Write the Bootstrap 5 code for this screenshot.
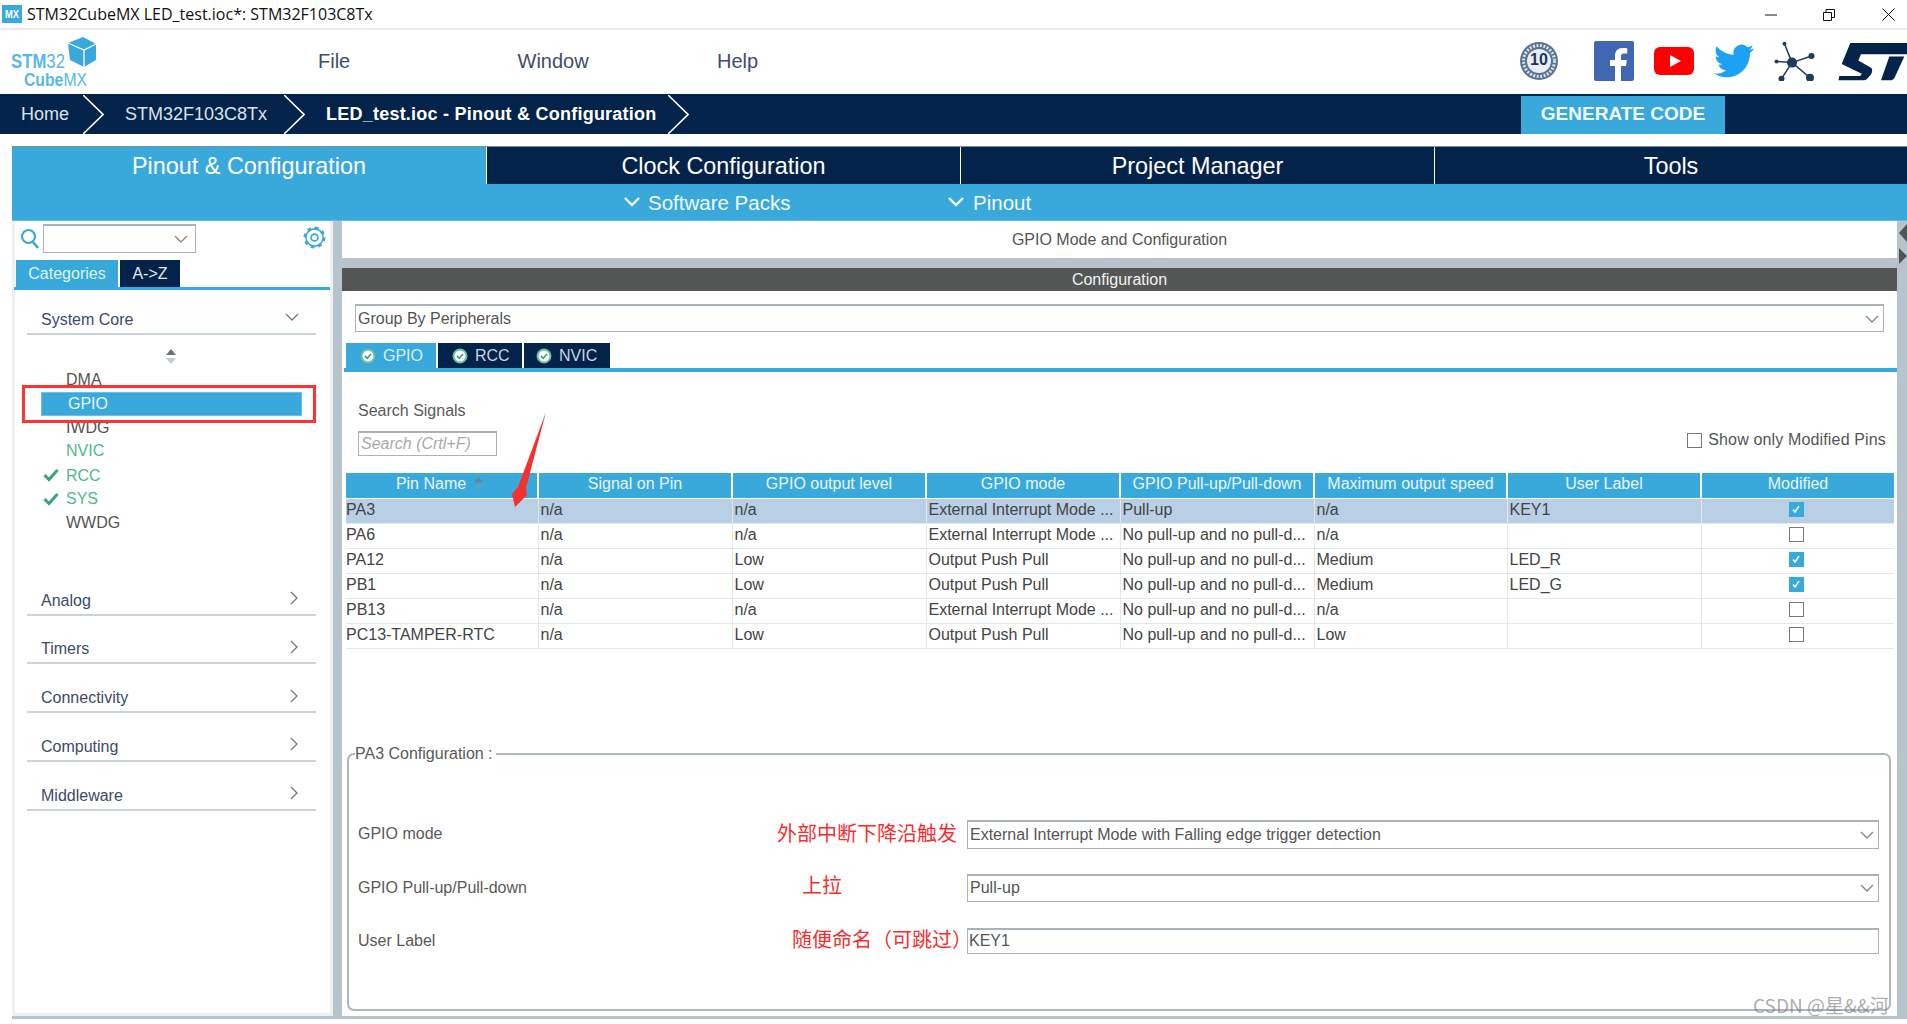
<!DOCTYPE html>
<html lang="en">
<head>
<meta charset="utf-8">
<title>STM32CubeMX</title>
<link href="https://cdn.jsdelivr.net/npm/bootstrap@5.3.0/dist/css/bootstrap.min.css" rel="stylesheet">
<style>
:root{--cube-blue:#39a9dc;--cube-navy:#03234b;--cube-rail:#b8c4cc;--cube-line:#e3e8eb;--cube-edge:#aab3b9;}
html,body{margin:0;background:#fff;overflow:hidden;}
body{font-family:"Liberation Sans",Arial,sans-serif;font-size:16px;color:#4a4a4a;line-height:1.5;}
.app-shell{width:1907px;height:1024px;position:relative;overflow:hidden;}
.title-strip{height:30px;border-bottom:2px solid #ececec;padding-left:2px;}
.title-text{font-family:"Open Sans","Liberation Sans",sans-serif;font-size:16px;color:#111;margin-left:5px;line-height:28px;white-space:nowrap;}
.win-a{width:58px;}
.win-b{width:59px;}
.win-c{width:25px;}
.top-head{height:64px;}
.menu-cell{width:199.5px;font-size:20px;color:#414c6c;padding-bottom:3px;}
.logo-svg{margin-left:8px;margin-right:210px;}
.head-icons{margin-right:-1px;margin-top:-2px;}
.crumb-bar{height:40px;background:var(--cube-navy);color:#fff;border-top:1px solid #03234b;}
.crumb-txt{font-size:18px;color:#dbe3ea;white-space:nowrap;}
.crumb-now{font-size:18px;font-weight:700;color:#fff;white-space:nowrap;letter-spacing:.23px;}
.gen-btn{width:204px;height:38px;margin-right:182px;padding:0;border:0;border-radius:0;background:var(--cube-blue);color:#f4fbff;font-weight:700;font-size:19px;}
.main-tabs{height:38px;margin:12px 0 0 12px;border-top:1px solid #7a8ea6;}
.main-tab{height:37px;background:var(--cube-navy);color:#fff;font-size:23.4px;line-height:38.5px;text-align:center;border-left:1px solid #fff;width:474px;}
.main-tab.on{background:var(--cube-blue);border-left:0;width:474px;}
.main-tab.w3{width:473px;}
.sub-bar{height:37px;margin-left:12px;background:var(--cube-blue);color:#f3fafe;font-size:20.5px;border-bottom:1px solid #5cbce6;}
.sub-lab{padding-top:2px;}
.work{height:798px;margin-left:12px;border-bottom:3px solid var(--cube-rail);background:#fff;position:relative;}
.side-pane{width:321px;border-left:3px solid #eef1f2;border-right:3px solid #eef1f2;position:relative;border-bottom:3px solid #eef1f2;}
.cat-tab{height:27px;line-height:27px;text-align:center;font-size:16px;}
.cat-on{width:102px;background:var(--cube-blue);color:#dff2fb;margin-left:1px;}
.cat-off{width:60px;background:var(--cube-navy);color:#e6ebf0;margin-left:2px;}
.cat-line{height:3px;background:var(--cube-blue);margin-left:-1px;margin-right:0;}
.sel-box{border-radius:0;border:1px solid var(--cube-edge);border-top-width:2px;padding:0 2px;height:28px;font-size:16px;color:#555;background-position:right 4px center;background-size:14px 10px;
background-image:url("data:image/svg+xml,%3csvg xmlns='http://www.w3.org/2000/svg' viewBox='0 0 14 10'%3e%3cpath fill='none' stroke='%23888' stroke-width='1.4' d='M1 2l6 6 6-6'/%3e%3c/svg%3e");}
.sel-box.tight{background-position:right 7px center;}
.sel-box:focus,.txt-box:focus{box-shadow:none;border-color:var(--cube-edge);}
.txt-box{border-radius:0;border:1px solid var(--cube-edge);border-top-width:2px;padding:0 1px;font-size:16px;color:#555;min-height:0;}
.acc-head{margin-left:12px;width:289px;height:33px;border-bottom:2px solid #c9d3d9;padding-top:5px;padding-left:14px;padding-right:17px;color:#404a68;font-size:16px;margin-top:15.75px;}
.acc-head svg{margin-bottom:5px;}
.item-list{margin-left:26px;width:261px;font-size:16px;}
.item-row{height:23.8px;line-height:23px;color:#555;}
.slot{width:25px;flex:none;padding-left:2px;}
.item-row.ok{color:#4fb98d;}
.item-row.pick{background:var(--cube-blue);color:#e8f6fc;border:1px solid #6cc0e6;padding-left:0;line-height:21px;}
.red-frame{position:absolute;left:7px;top:164px;width:294px;height:38px;border:3px solid #f33;pointer-events:none;}
.rail-v{width:9px;background:var(--cube-rail);flex:none;}
.rail-h{height:10px;background:var(--cube-rail);}
.right-pane{width:1555px;flex:none;position:relative;}
.pane-title{height:37px;line-height:37px;text-align:center;color:#555;font-size:16px;}
.dark-bar{height:23px;line-height:23px;background:#555756;color:#f2f2f2;text-align:center;}
.group-sel{margin:13px 0 0 13px;width:1529px;}
.pin-tabs{margin:11px 0 0 4px;height:25px;}
.pin-tab{height:25px;line-height:24px;background:var(--cube-navy);color:#c9d4df;margin-right:2px;font-size:16px;}
.pin-tab.on{background:var(--cube-blue);color:#d8f0fa;}
.blue-rule{height:4px;background:var(--cube-blue);margin-left:2px;margin-right:0;}
.search-row{height:101px;padding:0 11px 0 16px;}
.search-lab{margin-top:27px;height:24px;color:#5a5a5a;}
.search-inp{width:139px;height:25px;margin-top:8px;font-style:italic;padding-left:2px;}
.search-inp::placeholder{color:#aaa;opacity:1;}
.mod-check{margin-top:56px;height:24px;color:#555;letter-spacing:.15px;}
.box-tick{width:15px;height:15px;display:inline-block;border:1.5px solid #777;background:#fff;vertical-align:middle;}
.box-tick.yes{background:var(--cube-blue);border-color:var(--cube-blue);position:relative;}
.box-tick.yes svg{display:block;}
.pin-table{width:1548px;margin:0 0 0 4px;table-layout:fixed;border-collapse:collapse;font-size:16px;--bs-table-bg:transparent;}
.pin-table>thead>tr>th{background:var(--cube-blue);color:#e9f7fd;font-weight:400;text-align:center;height:25px;padding:0;line-height:22.5px;vertical-align:top;border:0;border-left:2px solid #fff;border-bottom:1px solid #fff;white-space:nowrap;overflow:hidden;}
.pin-table>thead>tr>th:first-child{border-left:0;}
.pin-table>tbody>tr>td{height:25px;padding:0 1px 0 2px;line-height:22px;vertical-align:top;color:#444;border:0;border-bottom:1.5px solid var(--cube-line);border-left:1.5px solid var(--cube-line);white-space:nowrap;overflow:hidden;background:transparent;box-shadow:none;}
.pin-table>tbody>tr>td:first-child{border-left:0;padding-left:0;}
.pin-table>tbody>tr>td.tick-cell{padding-right:4px;line-height:20px;}
.pin-table>tbody>tr.hit>td{background:#b8cfe5;}
.cfg-box{margin:93px 0 0 5px;width:1544px;height:269px;border:2px solid #aeb7bc;border-radius:7px;padding:0 10px 0 9px;}
.cfg-box legend{float:none;width:auto;font-size:16px;line-height:24px;margin:0 0 0 -3px;padding:0 3px 0 0;color:#5a5a5a;}
.cfg-row{color:#5a5a5a;}
.cfg-lab{width:400px;flex:none;}
.cfg-note{width:209px;flex:none;color:#f52f2f;text-align:left;font-family:"Noto Sans CJK SC","Liberation Sans",sans-serif;white-space:nowrap;line-height:1.2;font-size:20px;}
.note-a{padding:0 0 3px 19px;}
.note-b{padding:0 0 6px 44px;}
.note-c{padding:0 0 3px 34px;}
.cfg-field{width:912px;flex:none;}
.gutter{width:10px;background:var(--cube-rail);flex:none;padding-top:3px;}
.tri-l{width:0;height:0;border-top:9px solid transparent;border-bottom:9px solid transparent;border-right:8px solid #4f5557;margin-left:2px;}
.tri-r{width:0;height:0;border-top:8px solid transparent;border-bottom:8px solid transparent;border-left:8px solid #4f5557;margin-left:2px;margin-top:6px;}
.arrow-over{position:absolute;left:0;top:0;pointer-events:none;}
.mark-csdn{position:absolute;left:1753px;top:991px;font-family:"Noto Sans CJK SC","Liberation Sans",sans-serif;font-size:19px;color:rgba(120,120,120,.62);white-space:nowrap;line-height:28px;pointer-events:none;}
</style>
</head>
<body>
<div class="app-shell">

  <div class="title-strip d-flex align-items-center">
    <svg width="20" height="18" viewBox="0 0 20 18" class="flex-none"><rect width="20" height="18" fill="#39a9dc"/><text x="10" y="13" text-anchor="middle" font-family="Liberation Sans" font-weight="700" font-size="10" fill="#fff" textLength="14" lengthAdjust="spacingAndGlyphs">MX</text></svg>
    <span class="title-text">STM32CubeMX LED_test.ioc*: STM32F103C8Tx</span>
    <div class="ms-auto d-flex align-items-center">
      <div class="win-a"><svg width="12" height="12" viewBox="0 0 12 12"><path d="M0 6h12" stroke="#111" stroke-width="1"/></svg></div>
      <div class="win-b"><svg width="12" height="12" viewBox="0 0 12 12"><path d="M.5 3.5h8v8h-8zM3 3V.5h8.500v8H9" fill="none" stroke="#111"/></svg></div>
      <div class="win-c"><svg width="13" height="13" viewBox="0 0 13 13"><path d="M.5.5l12 12M12.500.5l-12 12" stroke="#111" fill="none"/></svg></div>
    </div>
  </div>

  <div class="top-head d-flex align-items-center">
    <svg class="logo-svg flex-none" width="100" height="64" viewBox="8 30 100 64">
      <path d="M68 43l15-6 13 7v16l-12 7-14-7z" fill="#39a9dc"/>
      <path d="M68 43l16 7 12-6M84 50v17" stroke="#fff" stroke-width="1.3" fill="none"/>
      <text x="11" y="68" font-family="Liberation Sans" font-size="21" fill="#5ab8e6" textLength="54" lengthAdjust="spacingAndGlyphs"><tspan font-weight="700">STM</tspan>32</text>
      <text x="24" y="86" font-family="Liberation Sans" font-size="18" fill="#5ab8e6" textLength="63" lengthAdjust="spacingAndGlyphs"><tspan font-weight="700">Cube</tspan>MX</text>
    </svg>
    <div class="menu-cell">File</div>
    <div class="menu-cell">Window</div>
    <div class="menu-cell">Help</div>
    <div class="head-icons ms-auto d-flex align-items-center flex-none" style="gap:20px">
      <svg width="40" height="40" viewBox="0 0 40 40" style="margin-right:15px">
        <circle cx="20" cy="20" r="19" fill="#5a7391"/><circle cx="20" cy="20" r="15.500" fill="none" stroke="#d9e0e8" stroke-width="3" stroke-dasharray="2 1.500"/><circle cx="20" cy="20" r="12" fill="#e9eef3"/>
        <text x="20" y="24" text-anchor="middle" font-family="Liberation Sans" font-weight="700" font-size="16" fill="#1d3557">10</text>
      </svg>
      <svg width="40" height="40" viewBox="0 0 40 40"><rect width="40" height="40" rx="2" fill="#4267b2"/><path d="M27 40V25h5l.8-6H27v-3.600c0-1.800.5-2.900 3-2.900h3.200V7.200c-.6-.1-2.400-.2-4.600-.2-4.600 0-7.600 2.800-7.600 7.800V19h-5v6h5v15z" fill="#fff"/></svg>
      <svg width="40" height="28" viewBox="0 0 40 28"><rect width="40" height="28" rx="6" fill="#f00"/><path d="M16 8l11 6-11 6z" fill="#fff"/></svg>
      <svg width="40" height="34" viewBox="0 2 24 20"><path fill="#1da1f2" d="M23.953 4.570a10 10 0 01-2.825.775 4.958 4.958 0 002.163-2.723c-.951.555-2.005.959-3.127 1.184a4.920 4.920 0 00-8.384 4.482C7.690 8.095 4.067 6.130 1.640 3.162a4.822 4.822 0 00-.666 2.475c0 1.710.870 3.213 2.188 4.096a4.904 4.904 0 01-2.228-.616v.060a4.923 4.923 0 003.946 4.827 4.996 4.996 0 01-2.212.085 4.936 4.936 0 004.604 3.417 9.867 9.867 0 01-6.102 2.105c-.390 0-.779-.023-1.170-.067a13.995 13.995 0 007.557 2.209c9.053 0 13.998-7.496 13.998-13.985 0-.210 0-.420-.015-.630A9.935 9.935 0 0024 4.590z"/></svg>
      <svg width="41" height="40" viewBox="0 0 41 40">
        <g stroke="#1d3a5f" stroke-width="1.500"><path d="M18 21.600L10.500 2.700M18 21.600L37.500 15M18 21.600L2.500 20.500M18 21.600L7.500 37.700M18 21.600L36 36.700"/></g>
        <g fill="#1d3a5f"><circle cx="18" cy="21.600" r="5"/><circle cx="10.500" cy="2.700" r="2"/><circle cx="37.500" cy="15" r="3"/><circle cx="2.500" cy="20.500" r="2"/><circle cx="7.500" cy="37.700" r="3"/><circle cx="36" cy="36.700" r="4"/></g>
      </svg>
      <svg width="70" height="39" viewBox="0 0 70 36" preserveAspectRatio="none" style="margin-left:3px">
        <path d="M12.300 1H70V11.300H23L20.300 17L33 23.700C35 25 34 28 33 30L30 33C29 34.500 28 35.300 26 35.300H.5L1.300 31.300H22.300L23.700 29.300L3.700 20.300z" fill="#03234b"/>
        <path d="M51.300 13.300H66.300L57 32C56 34.500 54 35.300 52 35.300H43z" fill="#03234b"/>
      </svg>
    </div>
  </div>

  <div class="crumb-bar d-flex align-items-center">
    <span class="crumb-txt" style="margin-left:21px;width:62px">Home</span>
    <svg width="21" height="39" viewBox="0 0 21 39" class="flex-none"><path d="M0 0l20 19.500L0 39" fill="none" stroke="#fff" stroke-width="1.600"/></svg>
    <span class="crumb-txt" style="margin-left:21px;width:159px">STM32F103C8Tx</span>
    <svg width="21" height="39" viewBox="0 0 21 39" class="flex-none"><path d="M0 0l20 19.500L0 39" fill="none" stroke="#fff" stroke-width="1.600"/></svg>
    <span class="crumb-now" style="margin-left:21px;width:342px">LED_test.ioc - Pinout &amp; Configuration</span>
    <svg width="21" height="39" viewBox="0 0 21 39" class="flex-none"><path d="M0 0l20 19.500L0 39" fill="none" stroke="#fff" stroke-width="1.600"/></svg>
    <button type="button" class="btn gen-btn ms-auto">GENERATE CODE</button>
  </div>

  <div class="main-tabs d-flex">
    <div class="main-tab on">Pinout &amp; Configuration</div>
    <div class="main-tab">Clock Configuration</div>
    <div class="main-tab">Project Manager</div>
    <div class="main-tab w3">Tools</div>
  </div>
  <div class="sub-bar d-flex align-items-center">
    <svg width="18" height="12" viewBox="0 0 18 12" style="margin-left:611px"><path d="M2 2l7 7 7-7" fill="none" stroke="#f3fafe" stroke-width="2.400"/></svg>
    <span class="sub-lab" style="margin-left:7px;width:299px">Software Packs</span>
    <svg width="18" height="12" viewBox="0 0 18 12"><path d="M2 2l7 7 7-7" fill="none" stroke="#f3fafe" stroke-width="2.400"/></svg>
    <span class="sub-lab" style="margin-left:8px">Pinout</span>
  </div>

  <div class="work d-flex">
    <aside class="side-pane">
      <div class="d-flex align-items-start" style="padding-top:3px;height:39px">
        <svg width="20" height="22" viewBox="0 0 20 22" style="margin:4px 0 0 5px" class="flex-none"><circle cx="8.500" cy="8.500" r="6.500" fill="none" stroke="#39a9dc" stroke-width="2.200"/><path d="M13 14l5 6" stroke="#39a9dc" stroke-width="2.600"/></svg>
        <select class="form-select sel-box tight flex-none" style="width:153px;margin-left:3px;height:29px" aria-label="search"><option></option></select>
        <svg width="23" height="23" viewBox="0 0 24 24" style="margin:2px 0 0 107px" class="flex-none"><circle cx="12" cy="12" r="9" fill="none" stroke="#39a9dc" stroke-width="1.600"/><circle cx="12" cy="12" r="9.800" fill="none" stroke="#39a9dc" stroke-width="3.400" stroke-dasharray="3.700 4"/><circle cx="12" cy="12" r="3.600" fill="none" stroke="#39a9dc" stroke-width="1.800"/></svg>
      </div>
      <div class="d-flex"><div class="cat-tab cat-on">Categories</div><div class="cat-tab cat-off">A-&gt;Z</div></div>
      <div class="cat-line"></div>

      <div class="acc-head d-flex justify-content-between align-items-center" style="margin-top:12px"><span>System Core</span><svg width="14" height="9" viewBox="0 0 14 9"><path d="M1 1l6 6 6-6" fill="none" stroke="#777" stroke-width="1.300"/></svg></div>
      <div style="height:33px;padding:14px 0 0 151px"><svg width="10" height="15" viewBox="0 0 10 15" style="display:block"><path d="M5 0l5 6H0z" fill="#6b7378"/><path d="M5 15l5-6H0z" fill="#c4cbcf"/></svg></div>
      <div class="item-list">
        <div class="item-row d-flex"><span class="slot"></span>DMA</div>
        <div class="item-row pick d-flex"><span class="slot" style="width:26px"></span>GPIO</div>
        <div class="item-row d-flex"><span class="slot"></span>IWDG</div>
        <div class="item-row ok d-flex"><span class="slot"></span>NVIC</div>
        <div class="item-row ok d-flex align-items-center"><span class="slot"><svg width="16" height="14" viewBox="0 0 16 14" style="display:block"><path d="M1.500 7l4.500 4.500L14.500 2" fill="none" stroke="#3aa678" stroke-width="3"/></svg></span>RCC</div>
        <div class="item-row ok d-flex align-items-center"><span class="slot"><svg width="16" height="14" viewBox="0 0 16 14" style="display:block"><path d="M1.500 7l4.500 4.500L14.500 2" fill="none" stroke="#3aa678" stroke-width="3"/></svg></span>SYS</div>
        <div class="item-row d-flex"><span class="slot"></span>WWDG</div>
      </div>
      <div class="acc-head d-flex justify-content-between align-items-center" style="margin-top:48px"><span>Analog</span><svg width="9" height="14" viewBox="0 0 9 14"><path d="M1 1l6 6-6 6" fill="none" stroke="#777" stroke-width="1.300"/></svg></div>
      <div class="acc-head d-flex justify-content-between align-items-center"><span>Timers</span><svg width="9" height="14" viewBox="0 0 9 14"><path d="M1 1l6 6-6 6" fill="none" stroke="#777" stroke-width="1.300"/></svg></div>
      <div class="acc-head d-flex justify-content-between align-items-center"><span>Connectivity</span><svg width="9" height="14" viewBox="0 0 9 14"><path d="M1 1l6 6-6 6" fill="none" stroke="#777" stroke-width="1.300"/></svg></div>
      <div class="acc-head d-flex justify-content-between align-items-center"><span>Computing</span><svg width="9" height="14" viewBox="0 0 9 14"><path d="M1 1l6 6-6 6" fill="none" stroke="#777" stroke-width="1.300"/></svg></div>
      <div class="acc-head d-flex justify-content-between align-items-center"><span>Middleware</span><svg width="9" height="14" viewBox="0 0 9 14"><path d="M1 1l6 6-6 6" fill="none" stroke="#777" stroke-width="1.300"/></svg></div>
      <div class="red-frame"></div>
    </aside>
    <div class="rail-v"></div>

    <main class="right-pane">
      <div class="pane-title">GPIO Mode and Configuration</div>
      <div class="rail-h"></div>
      <div class="dark-bar">Configuration</div>
      <select class="form-select sel-box group-sel" aria-label="group"><option>Group By Peripherals</option></select>
      <div class="pin-tabs d-flex">
        <div class="pin-tab on d-flex align-items-center" style="width:90px;padding-left:14px"><svg width="16" height="16" viewBox="0 0 16 16"><circle cx="8" cy="8" r="6.500" fill="#fff" stroke="#62c29d" stroke-width="2"/><path d="M5 8l2.300 2.300L11 6" fill="none" stroke="#3fa878" stroke-width="1.800"/></svg><span style="margin-left:7px">GPIO</span></div>
        <div class="pin-tab d-flex align-items-center" style="width:84px;padding-left:14px"><svg width="16" height="16" viewBox="0 0 16 16"><circle cx="8" cy="8" r="6.500" fill="#fff" stroke="#62c29d" stroke-width="2"/><path d="M5 8l2.300 2.300L11 6" fill="none" stroke="#3fa878" stroke-width="1.800"/></svg><span style="margin-left:7px">RCC</span></div>
        <div class="pin-tab d-flex align-items-center" style="width:86px;padding-left:12px"><svg width="16" height="16" viewBox="0 0 16 16"><circle cx="8" cy="8" r="6.500" fill="#fff" stroke="#62c29d" stroke-width="2"/><path d="M5 8l2.300 2.300L11 6" fill="none" stroke="#3fa878" stroke-width="1.800"/></svg><span style="margin-left:7px">NVIC</span></div>
      </div>
      <div class="blue-rule"></div>
      <div class="search-row d-flex justify-content-between">
        <div>
          <div class="search-lab">Search Signals</div>
          <input class="form-control txt-box search-inp" type="text" placeholder="Search (Crtl+F)" aria-label="search signals">
        </div>
        <div class="mod-check d-flex align-items-center"><span class="box-tick" style="margin-right:6px"></span>Show only Modified Pins</div>
      </div>
      <table class="table pin-table">
        <colgroup><col style="width:192px"><col style="width:194px"><col style="width:194px"><col style="width:194px"><col style="width:194px"><col style="width:193px"><col style="width:194px"><col style="width:193px"></colgroup>
        <thead><tr><th><span style="margin-left:-4px">Pin Name</span><svg width="9" height="13" viewBox="0 0 10 15" style="margin-left:8px;vertical-align:-1px"><path d="M5 0l5 6H0z" fill="#6b8494"/><path d="M5 15l5-6H0z" fill="#5aa4c9"/></svg></th><th>Signal on Pin</th><th>GPIO output level</th><th>GPIO mode</th><th>GPIO Pull-up/Pull-down</th><th>Maximum output speed</th><th>User Label</th><th>Modified</th></tr></thead>
        <tbody>
          <tr class="hit"><td>PA3</td><td>n/a</td><td>n/a</td><td>External Interrupt Mode ...</td><td>Pull-up</td><td>n/a</td><td>KEY1</td><td class="text-center tick-cell"><span class="box-tick yes"><svg width="12" height="12" viewBox="0 0 12 12"><path d="M3 6.500l2 2.500 4-6" fill="none" stroke="#fff" stroke-width="1.400"/></svg></span></td></tr>
          <tr><td>PA6</td><td>n/a</td><td>n/a</td><td>External Interrupt Mode ...</td><td>No pull-up and no pull-d...</td><td>n/a</td><td></td><td class="text-center tick-cell"><span class="box-tick"></span></td></tr>
          <tr><td>PA12</td><td>n/a</td><td>Low</td><td>Output Push Pull</td><td>No pull-up and no pull-d...</td><td>Medium</td><td>LED_R</td><td class="text-center tick-cell"><span class="box-tick yes"><svg width="12" height="12" viewBox="0 0 12 12"><path d="M3 6.500l2 2.500 4-6" fill="none" stroke="#fff" stroke-width="1.400"/></svg></span></td></tr>
          <tr><td>PB1</td><td>n/a</td><td>Low</td><td>Output Push Pull</td><td>No pull-up and no pull-d...</td><td>Medium</td><td>LED_G</td><td class="text-center tick-cell"><span class="box-tick yes"><svg width="12" height="12" viewBox="0 0 12 12"><path d="M3 6.500l2 2.500 4-6" fill="none" stroke="#fff" stroke-width="1.400"/></svg></span></td></tr>
          <tr><td>PB13</td><td>n/a</td><td>n/a</td><td>External Interrupt Mode ...</td><td>No pull-up and no pull-d...</td><td>n/a</td><td></td><td class="text-center tick-cell"><span class="box-tick"></span></td></tr>
          <tr><td>PC13-TAMPER-RTC</td><td>n/a</td><td>Low</td><td>Output Push Pull</td><td>No pull-up and no pull-d...</td><td>Low</td><td></td><td class="text-center tick-cell"><span class="box-tick"></span></td></tr>
        </tbody>
      </table>
      <fieldset class="cfg-box">
        <legend>PA3 Configuration :</legend>
        <div class="cfg-row d-flex align-items-center" style="margin-top:54px;height:29px">
          <div class="cfg-lab">GPIO mode</div><div class="cfg-note note-a">外部中断下降沿触发</div>
          <div class="cfg-field"><select class="form-select sel-box" style="height:29px" aria-label="mode"><option>External Interrupt Mode with Falling edge trigger detection</option></select></div>
        </div>
        <div class="cfg-row d-flex align-items-center" style="margin-top:25px;height:28px">
          <div class="cfg-lab">GPIO Pull-up/Pull-down</div><div class="cfg-note note-b">上拉</div>
          <div class="cfg-field"><select class="form-select sel-box" style="height:28px" aria-label="pull"><option>Pull-up</option></select></div>
        </div>
        <div class="cfg-row d-flex align-items-center" style="margin-top:26px;height:26px">
          <div class="cfg-lab">User Label</div><div class="cfg-note note-c">随便命名（可跳过）</div>
          <div class="cfg-field"><input class="form-control txt-box" style="height:26px" type="text" value="KEY1" aria-label="label"></div>
        </div>
      </fieldset>
    </main>
    <div class="gutter"><div class="tri-l"></div><div class="tri-r"></div></div>
  </div>

  <svg class="arrow-over" width="1907" height="1024" viewBox="0 0 1907 1024"><path d="M546 412L526 488L527 495L515 507L512 494L518 487z" fill="#f5302e"/></svg>
  <div class="mark-csdn">CSDN @星&amp;&amp;河</div>
</div>
<script src="https://cdn.jsdelivr.net/npm/bootstrap@5.3.0/dist/js/bootstrap.bundle.min.js"></script>
</body>
</html>
